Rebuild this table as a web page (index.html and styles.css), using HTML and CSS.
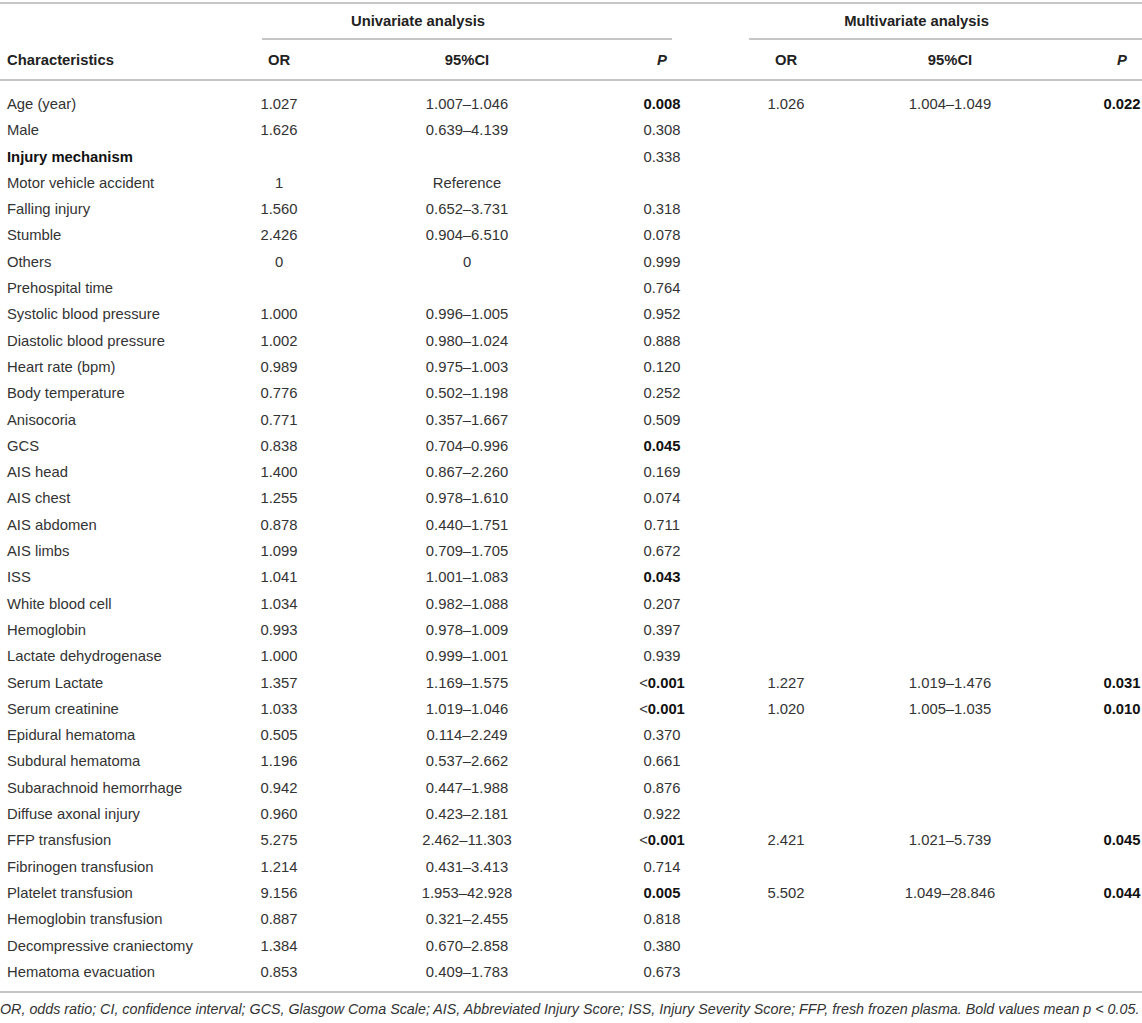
FILE: index.html
```html
<!DOCTYPE html>
<html lang="en">
<head>
  <meta charset="UTF-8" />
  <title>Univariate and multivariate analysis</title>
  <link rel="stylesheet" href="styles.css">
</head>
<body>
  <table class="results">
    <colgroup>
      <col class="c-name" />
      <col class="c-or" />
      <col class="c-ci" />
      <col class="c-p" />
      <col class="c-mor" />
      <col class="c-mci" />
      <col class="c-mp" />
    </colgroup>
    <thead>
      <tr class="groups">
        <th></th>
        <th colspan="3"><div class="group uni">Univariate analysis</div></th>
        <th colspan="3"><div class="group multi">Multivariate analysis</div></th>
      </tr>
      <tr class="cols">
        <th class="name">Characteristics</th>
        <th>OR</th>
        <th>95%CI</th>
        <th><i>P</i></th>
        <th>OR</th>
        <th>95%CI</th>
        <th class="mp"><i>P</i></th>
      </tr>
    </thead>
    <tbody>
      <tr class="first"><td class="name">Age (year)</td><td>1.027</td><td>1.007–1.046</td><td><b>0.008</b></td><td>1.026</td><td>1.004–1.049</td><td class="mp"><b>0.022</b></td></tr>
      <tr><td class="name">Male</td><td>1.626</td><td>0.639–4.139</td><td>0.308</td><td></td><td></td><td class="mp"></td></tr>
      <tr><td class="name"><b>Injury mechanism</b></td><td></td><td></td><td>0.338</td><td></td><td></td><td class="mp"></td></tr>
      <tr><td class="name">Motor vehicle accident</td><td>1</td><td>Reference</td><td></td><td></td><td></td><td class="mp"></td></tr>
      <tr><td class="name">Falling injury</td><td>1.560</td><td>0.652–3.731</td><td>0.318</td><td></td><td></td><td class="mp"></td></tr>
      <tr><td class="name">Stumble</td><td>2.426</td><td>0.904–6.510</td><td>0.078</td><td></td><td></td><td class="mp"></td></tr>
      <tr><td class="name">Others</td><td>0</td><td>0</td><td>0.999</td><td></td><td></td><td class="mp"></td></tr>
      <tr><td class="name">Prehospital time</td><td></td><td></td><td>0.764</td><td></td><td></td><td class="mp"></td></tr>
      <tr><td class="name">Systolic blood pressure</td><td>1.000</td><td>0.996–1.005</td><td>0.952</td><td></td><td></td><td class="mp"></td></tr>
      <tr><td class="name">Diastolic blood pressure</td><td>1.002</td><td>0.980–1.024</td><td>0.888</td><td></td><td></td><td class="mp"></td></tr>
      <tr><td class="name">Heart rate (bpm)</td><td>0.989</td><td>0.975–1.003</td><td>0.120</td><td></td><td></td><td class="mp"></td></tr>
      <tr><td class="name">Body temperature</td><td>0.776</td><td>0.502–1.198</td><td>0.252</td><td></td><td></td><td class="mp"></td></tr>
      <tr><td class="name">Anisocoria</td><td>0.771</td><td>0.357–1.667</td><td>0.509</td><td></td><td></td><td class="mp"></td></tr>
      <tr><td class="name">GCS</td><td>0.838</td><td>0.704–0.996</td><td><b>0.045</b></td><td></td><td></td><td class="mp"></td></tr>
      <tr><td class="name">AIS head</td><td>1.400</td><td>0.867–2.260</td><td>0.169</td><td></td><td></td><td class="mp"></td></tr>
      <tr><td class="name">AIS chest</td><td>1.255</td><td>0.978–1.610</td><td>0.074</td><td></td><td></td><td class="mp"></td></tr>
      <tr><td class="name">AIS abdomen</td><td>0.878</td><td>0.440–1.751</td><td>0.711</td><td></td><td></td><td class="mp"></td></tr>
      <tr><td class="name">AIS limbs</td><td>1.099</td><td>0.709–1.705</td><td>0.672</td><td></td><td></td><td class="mp"></td></tr>
      <tr><td class="name">ISS</td><td>1.041</td><td>1.001–1.083</td><td><b>0.043</b></td><td></td><td></td><td class="mp"></td></tr>
      <tr><td class="name">White blood cell</td><td>1.034</td><td>0.982–1.088</td><td>0.207</td><td></td><td></td><td class="mp"></td></tr>
      <tr><td class="name">Hemoglobin</td><td>0.993</td><td>0.978–1.009</td><td>0.397</td><td></td><td></td><td class="mp"></td></tr>
      <tr><td class="name">Lactate dehydrogenase</td><td>1.000</td><td>0.999–1.001</td><td>0.939</td><td></td><td></td><td class="mp"></td></tr>
      <tr><td class="name">Serum Lactate</td><td>1.357</td><td>1.169–1.575</td><td><span class="lt">&lt;</span><b>0.001</b></td><td>1.227</td><td>1.019–1.476</td><td class="mp"><b>0.031</b></td></tr>
      <tr><td class="name">Serum creatinine</td><td>1.033</td><td>1.019–1.046</td><td><span class="lt">&lt;</span><b>0.001</b></td><td>1.020</td><td>1.005–1.035</td><td class="mp"><b>0.010</b></td></tr>
      <tr><td class="name">Epidural hematoma</td><td>0.505</td><td>0.114–2.249</td><td>0.370</td><td></td><td></td><td class="mp"></td></tr>
      <tr><td class="name">Subdural hematoma</td><td>1.196</td><td>0.537–2.662</td><td>0.661</td><td></td><td></td><td class="mp"></td></tr>
      <tr><td class="name">Subarachnoid hemorrhage</td><td>0.942</td><td>0.447–1.988</td><td>0.876</td><td></td><td></td><td class="mp"></td></tr>
      <tr><td class="name">Diffuse axonal injury</td><td>0.960</td><td>0.423–2.181</td><td>0.922</td><td></td><td></td><td class="mp"></td></tr>
      <tr><td class="name">FFP transfusion</td><td>5.275</td><td>2.462–11.303</td><td><span class="lt">&lt;</span><b>0.001</b></td><td>2.421</td><td>1.021–5.739</td><td class="mp"><b>0.045</b></td></tr>
      <tr><td class="name">Fibrinogen transfusion</td><td>1.214</td><td>0.431–3.413</td><td>0.714</td><td></td><td></td><td class="mp"></td></tr>
      <tr><td class="name">Platelet transfusion</td><td>9.156</td><td>1.953–42.928</td><td><b>0.005</b></td><td>5.502</td><td>1.049–28.846</td><td class="mp"><b>0.044</b></td></tr>
      <tr><td class="name">Hemoglobin transfusion</td><td>0.887</td><td>0.321–2.455</td><td>0.818</td><td></td><td></td><td class="mp"></td></tr>
      <tr><td class="name">Decompressive craniectomy</td><td>1.384</td><td>0.670–2.858</td><td>0.380</td><td></td><td></td><td class="mp"></td></tr>
      <tr class="last"><td class="name">Hematoma evacuation</td><td>0.853</td><td>0.409–1.783</td><td>0.673</td><td></td><td></td><td class="mp"></td></tr>
    </tbody>
  </table>
  <p class="note">OR, odds ratio; CI, confidence interval; GCS, Glasgow Coma Scale; AIS, Abbreviated Injury Score; ISS, Injury Severity Score; FFP, fresh frozen plasma. Bold values mean p &lt; 0.05.</p>
</body>
</html>
```

FILE: styles.css
```css
body {
  margin: 0;
  padding: 0;
  font-family: "Liberation Sans", Arial, sans-serif;
  color: #333;
  background: #fff;
}
.results {
  width: 100%;
  border-collapse: collapse;
  table-layout: fixed;
  margin-top: 2px;
  border-top: 2px solid #c6c6c6;
  border-bottom: 2px solid #c6c6c6;
  font-size: 14.8px;
}
.c-name { width: 215px; }
.c-or { width: 128px; }
.c-ci { width: 248px; }
.c-p { width: 142px; }
.c-mor { width: 106px; }
.c-mci { width: 222px; }
.c-mp { width: 81px; }

th, td {
  padding: 0;
  text-align: center;
  white-space: nowrap;
}
th {
  font-weight: bold;
  color: #222;
}
.groups th {
  vertical-align: top;
}
.group {
  height: 34px;
  line-height: 34px;
  border-bottom: 2px solid #c6c6c6;
}
.uni {
  margin: 0 61px 0 47px;
  padding-right: 98px;
}
.multi {
  margin-left: 16px;
  padding-right: 58px;
}
.cols th {
  height: 39px;
  border-bottom: 2px solid #c6c6c6;
}
.name {
  text-align: left;
  padding-left: 7px;
}
.mp {
  padding-left: 41px;
}
td {
  line-height: 26.3px;
}
td b {
  color: #111;
}
.lt {
  font-weight: normal;
}
.first td {
  padding-top: 10px;
}
.last td {
  padding-bottom: 6px;
}
.note {
  margin: 8px 0 0;
  font-size: 14.3px;
  font-style: italic;
  color: #333;
}
```
